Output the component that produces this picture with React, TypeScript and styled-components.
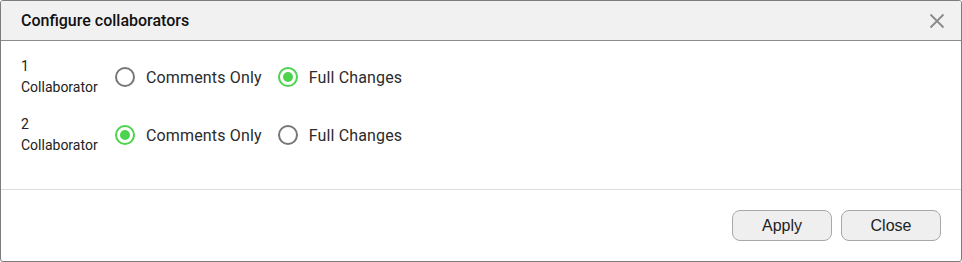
import React, {useState} from 'react';
import styled, {createGlobalStyle} from 'styled-components';

const GlobalStyle = createGlobalStyle`
  html, body {
    margin: 0;
    padding: 0;
    background: #ffffff;
  }
  * {
    box-sizing: border-box;
  }
`

type Access = 'comments' | 'full'

const options: {value: Access, label: string}[] = [
    {value: 'comments', label: 'Comments Only'},
    {value: 'full', label: 'Full Changes'},
]

export default function App() {
    const [rows, setRows] = useState<Access[]>(['full', 'comments'])

    const pick = (index: number, value: Access) => {
        setRows(rows.map((r, i) => (i === index ? value : r)))
    }

    return (
        <>
            <GlobalStyle/>
            <Dialog>
                <Header>
                    <Title>Configure collaborators</Title>
                    <CloseIcon aria-label="Close">
                        <svg width="16" height="16" viewBox="0 0 16 16">
                            <path d="M1.5 1.5 L14.5 14.5 M14.5 1.5 L1.5 14.5" stroke="#8a8a8a" strokeWidth="1.8" fill="none"/>
                        </svg>
                    </CloseIcon>
                </Header>
                <Body>
                    {rows.map((value, index) => (
                        <Row key={index}>
                            <RowLabel>
                                <span>{index + 1}</span>
                                <span>Collaborator</span>
                            </RowLabel>
                            {options.map(opt => (
                                <Option key={opt.value} onClick={() => pick(index, opt.value)}>
                                    <Radio $checked={value === opt.value}/>
                                    <OptionText>{opt.label}</OptionText>
                                </Option>
                            ))}
                        </Row>
                    ))}
                </Body>
                <Footer>
                    <Button>Apply</Button>
                    <Button>Close</Button>
                </Footer>
            </Dialog>
        </>
    )
}

const Dialog = styled.div`
  width: 962px;
  height: 262px;
  border: 1px solid #7c7c7c;
  border-radius: 3px;
  background: #ffffff;
  display: flex;
  flex-direction: column;
  overflow: hidden;
  font-family: Roboto, "Liberation Sans", sans-serif;
`

const Header = styled.div`
  height: 40px;
  flex: none;
  background: #f1f1f1;
  border-bottom: 1px solid #8c8c8c;
  display: flex;
  align-items: center;
  justify-content: space-between;
  padding: 0 16px 0 20px;
`

const Title = styled.div`
  font-size: 16px;
  font-weight: 500;
  color: #111111;
  padding-bottom: 1px;
`

const CloseIcon = styled.div`
  width: 16px;
  height: 16px;
  display: flex;
  cursor: pointer;
`

const Body = styled.div`
  height: 149px;
  flex: none;
  border-bottom: 1px solid #dddddd;
  padding: 15px 20px 0 20px;
  display: flex;
  flex-direction: column;
  gap: 16px;
`

const Row = styled.div`
  height: 42px;
  display: flex;
  align-items: center;
`

const RowLabel = styled.div`
  width: 94px;
  display: flex;
  flex-direction: column;
  font-size: 14px;
  line-height: 21px;
  color: #222222;
`

const Option = styled.label`
  display: flex;
  align-items: center;
  gap: 11px;
  margin-right: 16px;
  cursor: pointer;
`

const Radio = styled.span<{ $checked: boolean }>`
  width: 20px;
  height: 20px;
  border-radius: 50%;
  border: 2px solid ${p => (p.$checked ? '#4cd44c' : '#777777')};
  display: flex;
  align-items: center;
  justify-content: center;

  &::after {
    content: '';
    width: 10px;
    height: 10px;
    border-radius: 50%;
    background: ${p => (p.$checked ? '#4cd44c' : 'transparent')};
  }
`

const OptionText = styled.span`
  font-size: 16px;
  letter-spacing: 0.15px;
  color: #2b2b2b;
`

const Footer = styled.div`
  flex: 1;
  display: flex;
  justify-content: flex-end;
  align-items: flex-start;
  gap: 9px;
  padding: 20px 20px 0 0;
`

const Button = styled.button`
  width: 100px;
  height: 31px;
  border: 1px solid #a8a8a8;
  border-radius: 8px;
  background: #efefef;
  font-family: "Liberation Sans", Arial, sans-serif;
  font-size: 16px;
  color: #222222;
  cursor: pointer;
`
